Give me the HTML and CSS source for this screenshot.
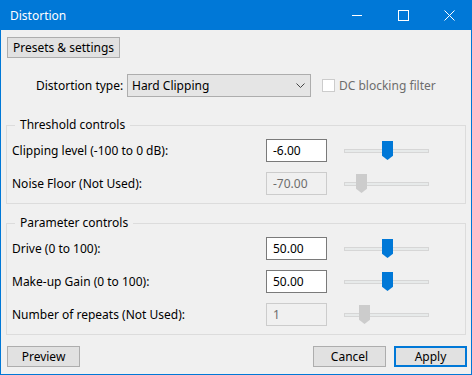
FILE: index.html
```html
<!DOCTYPE html>
<html lang="en">
<head>
  <meta charset="UTF-8">
  <title>Distortion</title>
  <link rel="stylesheet" href="styles.css">
</head>
<body>
  <div class="window">
    <div class="titlebar">
      <span class="title">Distortion</span>
      <div class="caption-buttons">
        <span class="cap">
          <svg width="11" height="11" viewBox="0 0 11 11"><path d="M0 5.5h10" stroke="#fff" stroke-width="1"/></svg>
        </span>
        <span class="cap">
          <svg width="11" height="11" viewBox="0 0 11 11"><rect x="0.5" y="0.5" width="10" height="10" fill="none" stroke="#fff" stroke-width="1"/></svg>
        </span>
        <span class="cap">
          <svg width="11" height="11" viewBox="0 0 11 11"><path d="M0.5 0.5l10 10M10.5 0.5l-10 10" stroke="#fff" stroke-width="1"/></svg>
        </span>
      </div>
    </div>

    <div class="content">
      <button class="btn presets">Presets &amp; settings</button>

      <div class="type-row">
        <label class="type-label">Distortion type:</label>
        <div class="select">
          <span>Hard Clipping</span>
          <svg width="9" height="5" viewBox="0 0 9 5"><path d="M0.5 0.5l4 4 4-4" fill="none" stroke="#444" stroke-width="1"/></svg>
        </div>
        <label class="check disabled"><span class="box"></span>DC blocking filter</label>
      </div>

      <fieldset class="group">
        <legend>Threshold controls</legend>
        <div class="row">
          <span class="row-label">Clipping level (-100 to 0 dB):</span>
          <div class="field">-6.00</div>
          <div class="slider"><span class="thumb" style="left: 37px"></span></div>
        </div>
        <div class="row">
          <span class="row-label">Noise Floor (Not Used):</span>
          <div class="field disabled">-70.00</div>
          <div class="slider disabled"><span class="thumb" style="left: 11px"></span></div>
        </div>
      </fieldset>

      <fieldset class="group">
        <legend>Parameter controls</legend>
        <div class="row">
          <span class="row-label">Drive (0 to 100):</span>
          <div class="field">50.00</div>
          <div class="slider"><span class="thumb" style="left: 37px"></span></div>
        </div>
        <div class="row">
          <span class="row-label">Make-up Gain (0 to 100):</span>
          <div class="field">50.00</div>
          <div class="slider"><span class="thumb" style="left: 37px"></span></div>
        </div>
        <div class="row">
          <span class="row-label">Number of repeats (Not Used):</span>
          <div class="field disabled">1</div>
          <div class="slider disabled"><span class="thumb" style="left: 14px"></span></div>
        </div>
      </fieldset>

      <div class="footer">
        <button class="btn small">Preview</button>
        <div class="footer-right">
          <button class="btn small">Cancel</button>
          <button class="btn small default">Apply</button>
        </div>
      </div>
    </div>
  </div>
</body>
</html>
```

FILE: styles.css
```css
:root {
  --accent: #0078d7;
  --face: #f0f0f0;
  --btn: #e1e1e1;
  --btn-border: #adadad;
  --group-border: #dcdcdc;
  --gray-text: #6d6d6d;
}

* {
  margin: 0;
  padding: 0;
  box-sizing: border-box;
}

body {
  font-family: "Segoe UI", "Noto Sans", sans-serif;
  font-size: 12px;
  color: #000;
  background: var(--face);
}

.window {
  width: 472px;
  height: 375px;
  border: 1px solid var(--accent);
  border-top: none;
  background: var(--face);
  display: flex;
  flex-direction: column;
}

.titlebar {
  height: 30px;
  margin: 0 -1px;
  background: var(--accent);
  color: #fff;
  display: flex;
  align-items: center;
  padding-left: 10px;
}

.title {
  flex: 1;
  font-size: 12px;
}

.caption-buttons {
  display: flex;
}

.cap {
  width: 46px;
  height: 30px;
  display: flex;
  align-items: center;
  justify-content: center;
}

.content {
  padding: 0 5px;
  display: flex;
  flex-direction: column;
}

.btn {
  font-family: inherit;
  font-size: 12px;
  color: #000;
  background: var(--btn);
  border: 1px solid var(--btn-border);
  height: 21px;
  line-height: 19px;
}

.presets {
  margin: 7px 0 0 1px;
  width: 113px;
  height: 21px;
}

.type-row {
  display: flex;
  align-items: center;
  margin-top: 16px;
  height: 23px;
  padding-left: 30px;
}

.type-label {
  width: 91px;
}

.select {
  width: 184px;
  height: 23px;
  background: #e5e5e5;
  border: 1px solid var(--btn-border);
  display: flex;
  align-items: center;
  justify-content: space-between;
  padding: 0 5px 0 4px;
}

.check {
  display: flex;
  align-items: center;
  margin-left: 11px;
  gap: 4px;
}

.check .box {
  width: 13px;
  height: 13px;
  border: 1px solid #cccccc;
  background: #fff;
}

.disabled {
  color: var(--gray-text);
}

.group {
  border: 1px solid var(--group-border);
  margin-top: 20px;
  padding: 6px 0 8px 5px;
  display: flex;
  flex-direction: column;
  gap: 10px;
}

.group + .group {
  margin-top: 11px;
}

.group legend {
  margin-left: 3px;
  padding: 0 5px 0 5px;
  line-height: 16px;
}

.row {
  display: grid;
  grid-template-columns: 237px 61px 85px;
  column-gap: 17px;
  align-items: center;
  height: 23px;
}

.field {
  height: 23px;
  border: 1px solid #7a7a7a;
  background: #fff;
  padding-left: 6px;
  line-height: 21px;
}

.field.disabled {
  border-color: #cccccc;
  background: var(--face);
}

.slider {
  position: relative;
  height: 4px;
  border: 1px solid #d6d6d6;
  background: #e7eaea;
  margin-top: 1px;
}

.thumb {
  position: absolute;
  top: -9px;
  width: 11px;
  height: 19px;
  background: var(--accent);
  clip-path: polygon(0 0, 100% 0, 100% 78%, 50% 100%, 0 78%);
}

.slider.disabled .thumb {
  background: #cccccc;
}

.footer {
  display: flex;
  justify-content: space-between;
  margin-top: 11px;
  padding-left: 1px;
}

.footer-right {
  display: flex;
  gap: 8px;
  margin-right: -1px;
}

.btn.small {
  width: 73px;
}

.btn.default {
  border: 2px solid var(--accent);
  line-height: 17px;
}
```
